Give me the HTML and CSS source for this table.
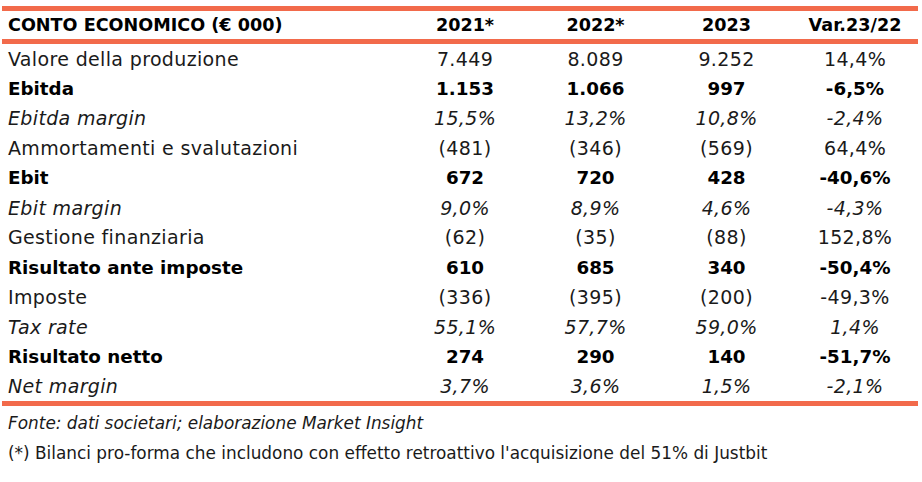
FILE: index.html
```html
<!DOCTYPE html>
<html lang="it">
<head>
<meta charset="utf-8">
<link rel="stylesheet" href="styles.css">
</head>
<body>
<div class="page">
<table class="ce">
  <colgroup>
    <col class="c-label"><col class="c1"><col class="c2"><col class="c3"><col class="c4">
  </colgroup>
  <thead>
    <tr><th class="lbl">CONTO ECONOMICO (€ 000)</th><th>2021*</th><th>2022*</th><th>2023</th><th>Var.23/22</th></tr>
  </thead>
  <tbody>
    <tr><td class="lbl">Valore della produzione</td><td>7.449</td><td>8.089</td><td>9.252</td><td>14,4%</td></tr>
    <tr class="b"><td class="lbl">Ebitda</td><td>1.153</td><td>1.066</td><td>997</td><td>-6,5%</td></tr>
    <tr class="i"><td class="lbl">Ebitda margin</td><td>15,5%</td><td>13,2%</td><td>10,8%</td><td>-2,4%</td></tr>
    <tr><td class="lbl">Ammortamenti e svalutazioni</td><td>(481)</td><td>(346)</td><td>(569)</td><td>64,4%</td></tr>
    <tr class="b"><td class="lbl">Ebit</td><td>672</td><td>720</td><td>428</td><td>-40,6%</td></tr>
    <tr class="i"><td class="lbl">Ebit margin</td><td>9,0%</td><td>8,9%</td><td>4,6%</td><td>-4,3%</td></tr>
    <tr><td class="lbl">Gestione finanziaria</td><td>(62)</td><td>(35)</td><td>(88)</td><td>152,8%</td></tr>
    <tr class="b"><td class="lbl">Risultato ante imposte</td><td>610</td><td>685</td><td>340</td><td>-50,4%</td></tr>
    <tr><td class="lbl">Imposte</td><td>(336)</td><td>(395)</td><td>(200)</td><td>-49,3%</td></tr>
    <tr class="i"><td class="lbl">Tax rate</td><td>55,1%</td><td>57,7%</td><td>59,0%</td><td>1,4%</td></tr>
    <tr class="b"><td class="lbl">Risultato netto</td><td>274</td><td>290</td><td>140</td><td>-51,7%</td></tr>
    <tr class="i last"><td class="lbl">Net margin</td><td>3,7%</td><td>3,6%</td><td>1,5%</td><td>-2,1%</td></tr>
  </tbody>
</table>
<p class="note src">Fonte: dati societari; elaborazione Market Insight</p>
<p class="note">(*) Bilanci pro-forma che includono con effetto retroattivo l'acquisizione del 51% di Justbit</p>
</div>
</body>
</html>
```
FILE: styles.css
```css
html, body {
  margin: 0;
  padding: 0;
  background: #ffffff;
}
body {
  font-family: "DejaVu Sans", "Liberation Sans", sans-serif;
  color: #1a1a1a;
}
.page {
  padding: 6px 4px 0 2px;
}
.ce {
  width: 916px;
  border-collapse: collapse;
  table-layout: fixed;
  font-size: 19px;
  letter-spacing: 0.35px;
}
.c-label { width: 398px; }
.c1 { width: 130px; }
.c2 { width: 131px; }
.c3 { width: 131px; }
.c4 { width: 126px; }
.ce th {
  font-weight: bold;
  font-size: 17.6px;
  letter-spacing: 0;
  height: 28px;
  padding: 0;
  text-align: center;
  border-top: 5px solid #f26a4b;
  border-bottom: 5px solid #f26a4b;
  color: #000;
}
.ce td {
  height: 29.75px;
  padding: 0;
  text-align: center;
  vertical-align: middle;
}
.ce .lbl {
  text-align: left;
  padding-left: 6px;
}
.ce tr.b td {
  font-weight: bold;
  font-size: 18.3px;
  letter-spacing: 0;
  color: #000;
}
.ce tr.i td { font-style: italic; }
.ce tr.last td { border-bottom: 5px solid #f26a4b; }
.note {
  margin: 0;
  padding-left: 6px;
  font-size: 16.9px;
  height: 30px;
  line-height: 30px;
}
.note.src {
  font-style: italic;
  margin-top: 2px;
}
```
